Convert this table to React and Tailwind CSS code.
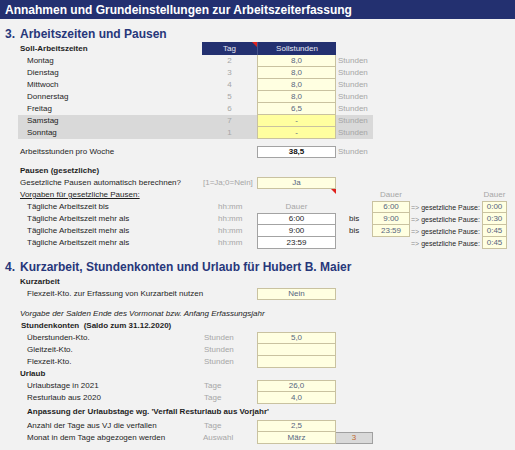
import React from "react";

const CREAM = "bg-[#ffffe1] border-[#c9c2a0] text-[#56657f]";
const WHITE = "bg-white border-[#a3a3a3] text-[#1e1e1e]";

function Box({ children, top, white, className = "" }) {
  return (
    <div
      className={`flex h-full items-center justify-center border-x border-b ${top ? "border-t" : ""} ${white ? WHITE : CREAM} ${className}`}
    >
      {children}
    </div>
  );
}

function Triangle({ className = "" }) {
  return (
    <span
      className={`absolute h-[5px] w-[5px] bg-[#e0201c] [clip-path:polygon(0_0,100%_0,100%_100%)] ${className}`}
    />
  );
}

function SectionTitle({ num, text, className = "" }) {
  return (
    <div className={`flex items-center pl-[5px] text-[12px] font-bold text-[#27377a] ${className}`}>
      <span className="w-[15px]">{num}</span>
      <span>{text}</span>
    </div>
  );
}

function Row({ label, indent = true, unit, unitPad = "pl-[2px]", box, boxTop, white, after, h = "h-[12px]", labelClass = "" }) {
  return (
    <div className={`flex ${h}`}>
      <div className={`flex w-[202px] items-center whitespace-pre ${indent ? "pl-[27px]" : "pl-[20px]"} ${labelClass}`}>
        {label}
      </div>
      <div className={`flex w-[55px] items-center text-[#a6a6a6] ${unitPad}`}>{unit}</div>
      <div className="w-[79px]">
        {box !== undefined && (
          <Box top={boxTop} white={white}>
            {box}
          </Box>
        )}
      </div>
      {after}
    </div>
  );
}

const days = [
  ["Montag", "2", "8,0"],
  ["Dienstag", "3", "8,0"],
  ["Mittwoch", "4", "8,0"],
  ["Donnerstag", "5", "8,0"],
  ["Freitag", "6", "6,5"],
  ["Samstag", "7", "-"],
  ["Sonntag", "1", "-"],
];

function PauseRow({ label, mid, midTop, midHeader, bis, right, rightTop, pause, pauseTop }) {
  return (
    <div className="flex h-[12px]">
      <div className="flex w-[202px] items-center pl-[27px]">{label}</div>
      <div className="flex w-[55px] items-center pl-[16px] text-[#a6a6a6]">hh:mm</div>
      <div className="w-[79px]">
        {midHeader ? (
          <div className="flex h-full items-center justify-center text-[#a6a6a6]">Dauer</div>
        ) : (
          <Box white top={midTop}>
            {mid}
          </Box>
        )}
      </div>
      <div className="flex w-[36px] items-center pl-[13px]">{bis ? "bis" : ""}</div>
      <div className="w-[38px]">
        {right && <Box top={rightTop}>{right}</Box>}
      </div>
      <div className="flex w-[72px] items-center overflow-visible whitespace-nowrap pl-[1px] text-[7px]">
        <span className="text-[#8a8a8a]">=&gt;</span>
        <span>&nbsp;gesetzliche Pause:</span>
      </div>
      <div className="w-[25px]">
        <Box top={pauseTop}>{pause}</Box>
      </div>
    </div>
  );
}

export default function App() {
  return (
    <div className="h-[450px] w-[515px] overflow-hidden bg-[#f2f2f2] font-['Liberation_Sans',Arial,sans-serif] text-[8px] leading-none text-[#1e1e1e]">
      <div className="flex h-[19px] items-center bg-[#233070] pl-[5px] text-[12px] font-bold text-white">
        Annahmen und Grundeinstellungen zur Arbeitszeiterfassung
      </div>

      <SectionTitle className="mt-[7px] h-[16px]" num="3." text="Arbeitszeiten und Pausen" />

      <div className="flex h-[13px]">
        <div className="flex w-[202px] items-center pl-[20px] font-bold">Soll-Arbeitszeiten</div>
        <div className="relative flex w-[55px] items-center justify-center bg-[#233070] text-[#e6e8f2]">
          Tag
          <Triangle className="right-0 top-0" />
        </div>
        <div className="flex w-[79px] items-center justify-center border-l border-[#46538a] bg-[#233070] text-[#e6e8f2]">
          Sollstunden
        </div>
      </div>

      {days.map(([d, t, v], i) => {
        const we = i >= 5;
        return (
          <div key={d} className="flex h-[12px]">
            <div className={`ml-[18px] flex w-[355px] ${we ? "bg-[#d9d9d9]" : ""}`}>
              <div className="flex w-[184px] items-center pl-[9px]">{d}</div>
              <div className="flex w-[55px] items-center justify-center text-[#a6a6a6]">{t}</div>
              <div
                className={`flex w-[79px] items-center justify-center border-x border-b border-[#c9c2a0] text-[#56657f] ${we ? "bg-[#ffff9f]" : "bg-[#ffffe1]"}`}
              >
                {v}
              </div>
              <div className="flex items-center pl-[2px] text-[#a6a6a6]">Stunden</div>
            </div>
          </div>
        );
      })}

      <div className="mt-[7px]">
        <Row
          indent={false}
          label="Arbeitsstunden pro Woche"
          box={<span className="font-bold text-[#111]">38,5</span>}
          boxTop
          white
          after={<div className="flex items-center pl-[2px] text-[#a6a6a6]">Stunden</div>}
        />
      </div>

      <div className="mt-[7px] flex h-[12px] items-center pl-[20px] font-bold">Pausen (gesetzliche)</div>

      <div className="flex h-[12px]">
        <div className="flex w-[202px] items-center pl-[20px]">Gesetzliche Pausen automatisch berechnen?</div>
        <div className="flex w-[55px] items-center pl-[1px] text-[#a6a6a6]">[1=Ja;0=Nein]</div>
        <div className="relative w-[79px]">
          <Box top className="text-[#2a2a2a]">
            Ja
          </Box>
          <Triangle className="-bottom-[5px] right-0" />
        </div>
      </div>

      <div className="flex h-[12px]">
        <div className="flex w-[202px] items-center pl-[20px] underline">Vorgaben für gesetzliche Pausen:</div>
        <div className="w-[170px]" />
        <div className="flex w-[38px] items-center justify-center text-[#a6a6a6]">Dauer</div>
        <div className="w-[72px]" />
        <div className="flex w-[25px] items-center justify-center text-[#a6a6a6]">Dauer</div>
      </div>

      <PauseRow label="Tägliche Arbeitszeit bis" midHeader right="6:00" rightTop pause="0:00" pauseTop />
      <PauseRow label="Tägliche Arbeitszeit mehr als" mid="6:00" midTop bis right="9:00" pause="0:30" />
      <PauseRow label="Tägliche Arbeitszeit mehr als" mid="9:00" bis right="23:59" pause="0:45" />
      <PauseRow label="Tägliche Arbeitszeit mehr als" mid="23:59" pause="0:45" />

      <SectionTitle
        className="mt-[11px] h-[14px]"
        num="4."
        text="Kurzarbeit, Stundenkonten und Urlaub für Hubert B. Maier"
      />

      <div className="mt-[2px] flex h-[12px] items-center pl-[20px] font-bold">Kurzarbeit</div>
      <Row label="Flexzeit-Kto. zur Erfassung von Kurzarbeit nutzen" box="Nein" boxTop />

      <div className="mt-[8px] flex h-[12px] items-center pl-[20px] italic">
        Vorgabe der Salden Ende des Vormonat bzw. Anfang Erfassungsjahr
      </div>
      <div className="flex h-[12px] items-center whitespace-pre pl-[21px] font-bold">
        Stundenkonten  (Saldo zum 31.12.2020)
      </div>
      <Row label="Überstunden-Kto." unit="Stunden" box="5,0" boxTop />
      <Row label="Gleitzeit-Kto." unit="Stunden" box="" />
      <Row label="Flexzeit-Kto." unit="Stunden" box="" />

      <div className="flex h-[12px] items-center pl-[20px] font-bold">Urlaub</div>
      <Row label="Urlaubstage in 2021" unit="Tage" box="26,0" boxTop />
      <Row label="Resturlaub aus 2020" unit="Tage" box="4,0" />

      <div className="flex h-[16px] items-center pl-[27px] font-bold">
        Anpassung der Urlaubstage wg. 'Verfall Resturlaub aus Vorjahr'
      </div>
      <Row label="Anzahl der Tage aus VJ die verfallen" unit="Tage" box="2,5" boxTop />
      <Row
        label="Monat in dem Tage abgezogen werden"
        unit="Auswahl"
        unitPad="pl-[1px]"
        box="März"
        after={
          <div className="flex w-[37px] items-center justify-center border-y border-r border-[#a0a0a0] bg-[#d9d9d9] text-[#c0692e]">
            3
          </div>
        }
      />
    </div>
  );
}
